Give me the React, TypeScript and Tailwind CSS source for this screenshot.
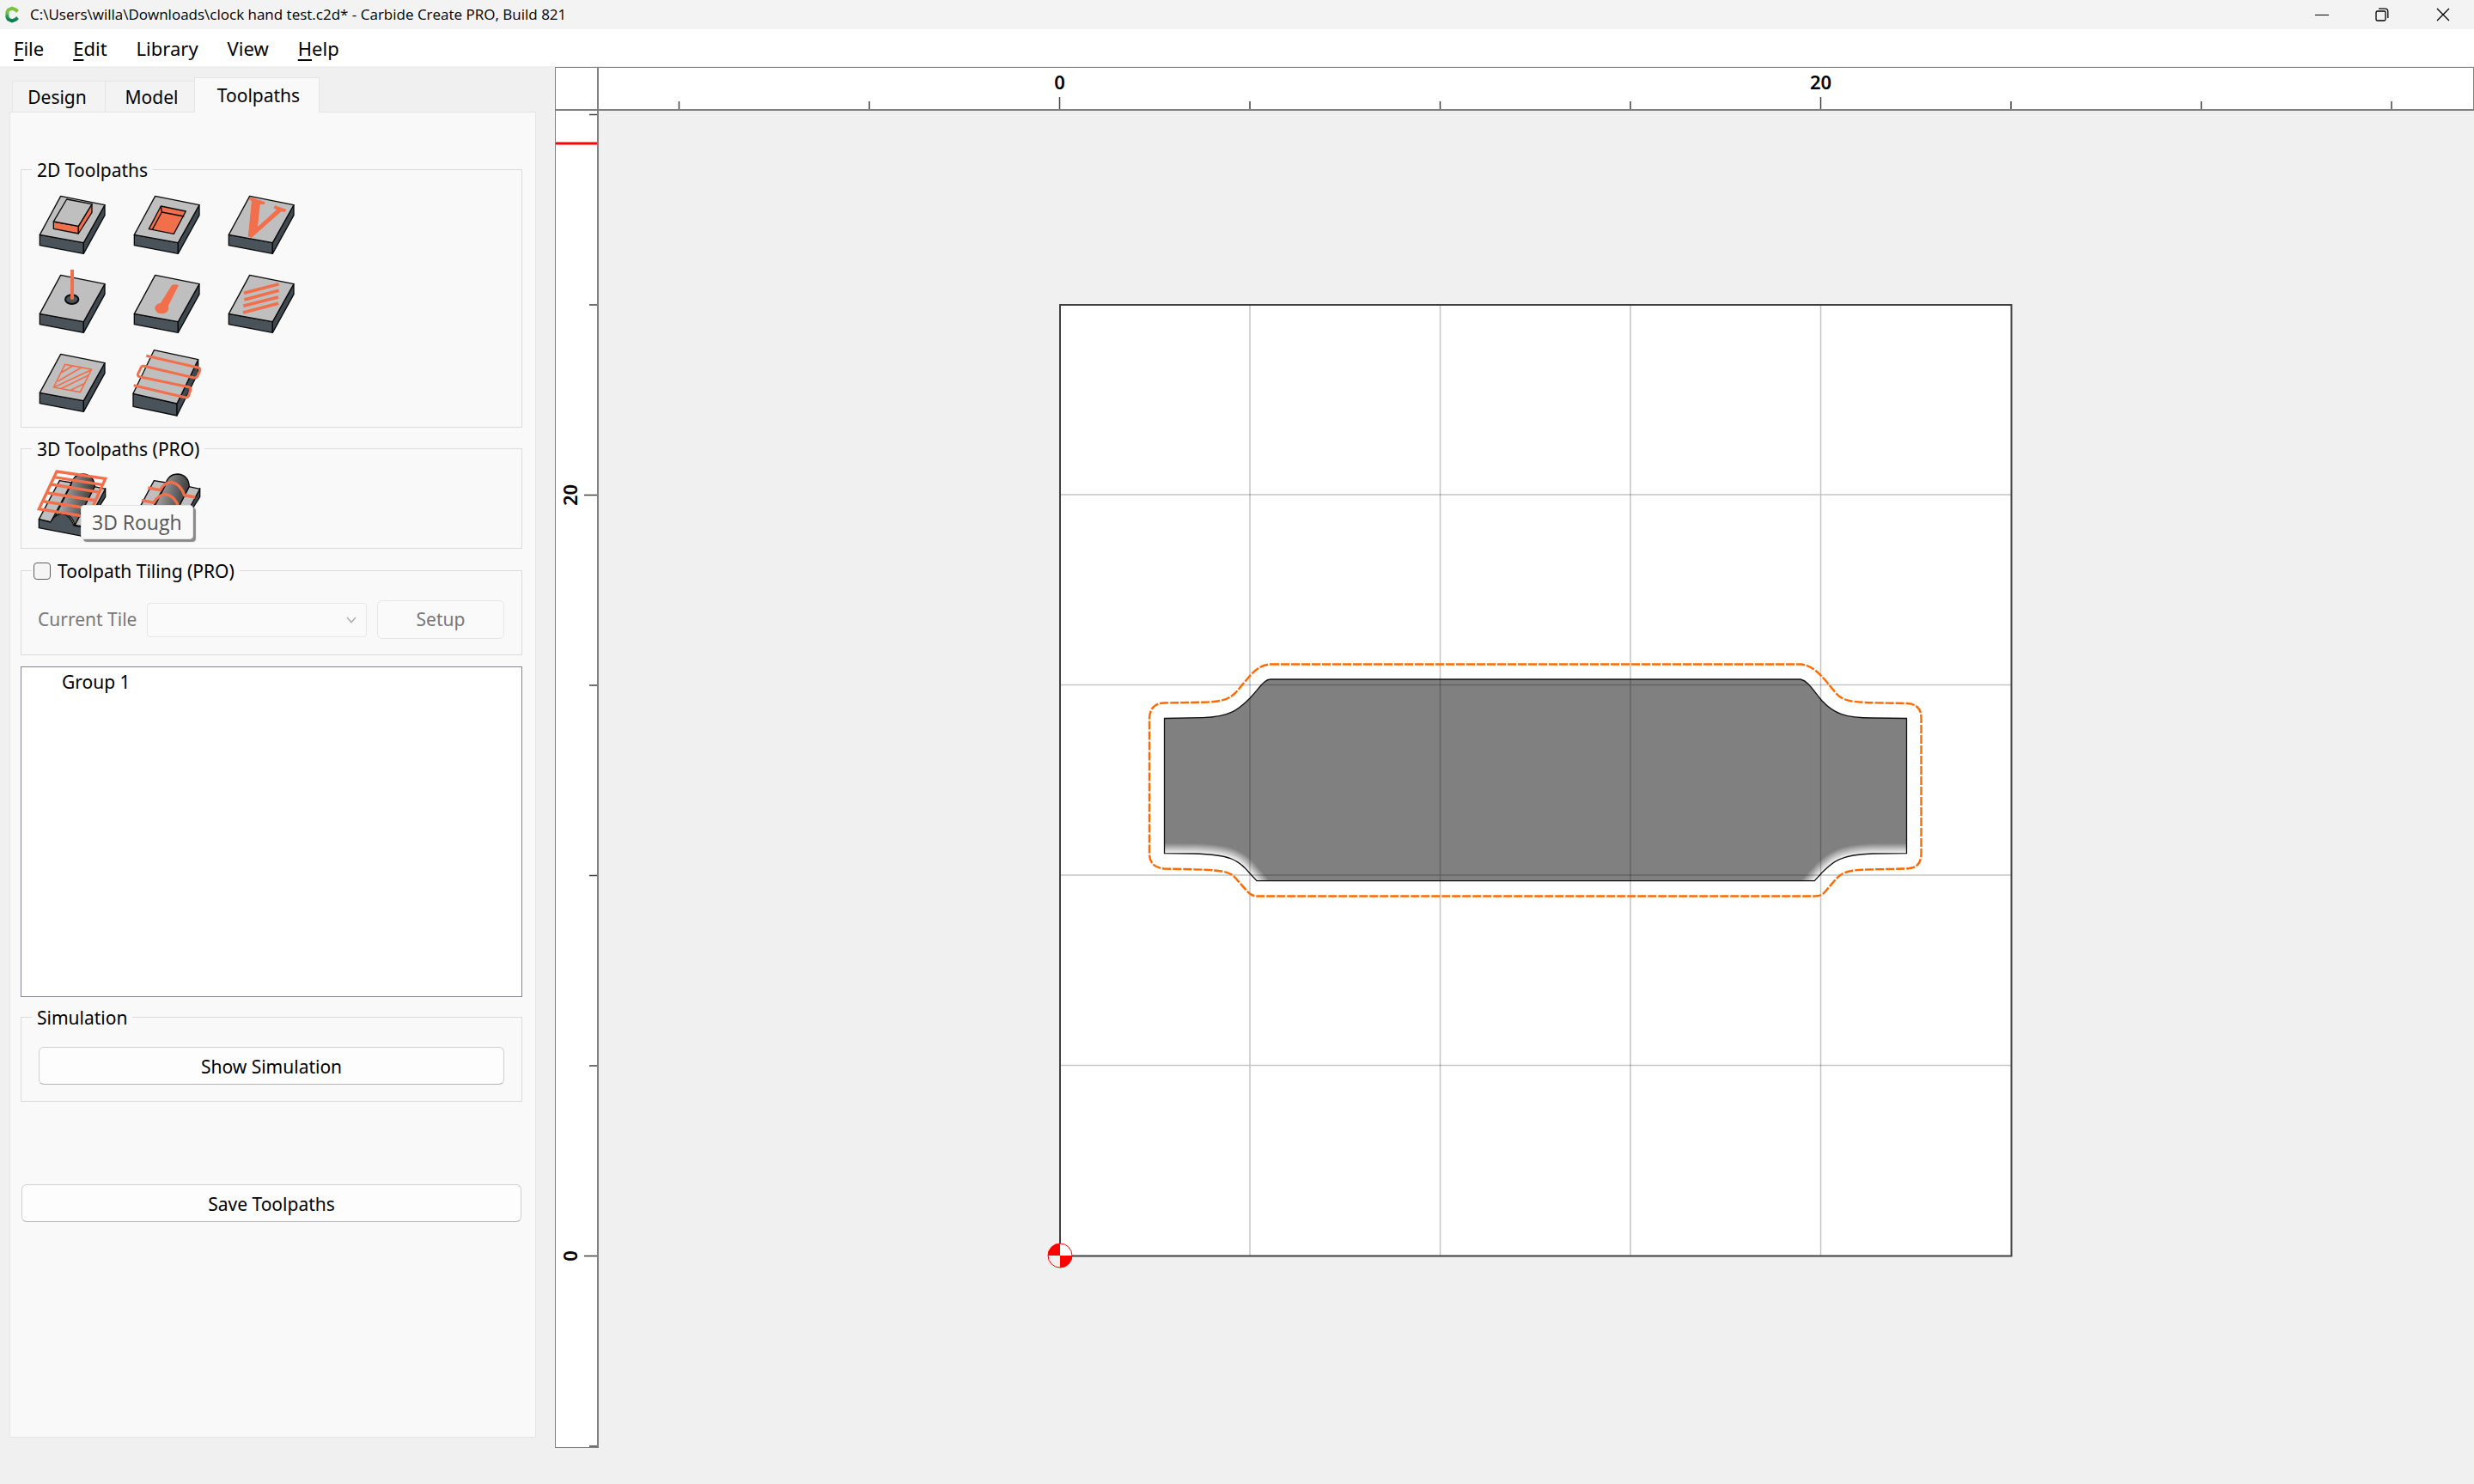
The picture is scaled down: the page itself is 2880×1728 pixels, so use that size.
import type { ReactNode } from "react";

const ORANGE = "#f26f4c";
const STEP = 221.5;

/* ---------- toolpath icons ---------- */

function Slab() {
  return (
    <g stroke="#0a0a0a" strokeWidth="4" strokeLinejoin="round">
      <path d="M7 154L160 182V220L7 191Z" fill="#4a525a" />
      <path d="M160 182L234 50V86L160 220Z" fill="#414950" />
      <path d="M80 19L234 50L160 182L7 154Z" fill="#bfbfbf" />
    </g>
  );
}

function Icon({ children }: { children: ReactNode }) {
  return (
    <svg viewBox="0 0 240 240" className="size-20 overflow-visible" aria-hidden="true">
      {children}
    </svg>
  );
}

const ContourIcon = () => (
  <Icon>
    <Slab />
    <g stroke="#0a0a0a" strokeWidth="4" strokeLinejoin="round">
      <path d="M55 108L142 124V150L55 133Z" fill={ORANGE} />
      <path d="M189 47V76L142 150V124Z" fill={ORANGE} />
      <path d="M101 30L189 47L142 124L55 108Z" fill="#bfbfbf" />
    </g>
  </Icon>
);

const PocketIcon = () => (
  <Icon>
    <Slab />
    <g stroke="#0a0a0a" strokeWidth="4" strokeLinejoin="round">
      <path d="M100 54L187 72L145 151L58 134Z" fill={ORANGE} />
      <path d="M100 54L103 75L181 90M103 75L70 136" fill="none" />
    </g>
  </Icon>
);

const VCarveIcon = () => (
  <Icon>
    <Slab />
    <text
      transform="translate(30 140) rotate(19)"
      fill={ORANGE}
      stroke={ORANGE}
      strokeWidth="3"
      fontFamily="Liberation Serif, serif"
      fontStyle="italic"
      fontWeight="700"
      fontSize="194"
    >
      V
    </text>
  </Icon>
);

const DrillIcon = () => (
  <Icon>
    <Slab />
    <ellipse cx="119" cy="104" rx="23" ry="16" fill="#4a525a" stroke="#0a0a0a" strokeWidth="6" />
    <path d="M120 0V104" stroke={ORANGE} strokeWidth="12" />
  </Icon>
);

const KeyholeIcon = () => (
  <Icon>
    <Slab />
    <ellipse cx="103" cy="135" rx="24" ry="19" fill={ORANGE} />
    <path d="M138 54Q149 49 162 54L125 128L98 118Z" fill={ORANGE} />
  </Icon>
);

const HatchIcon = () => (
  <Icon>
    <Slab />
    <path
      d="M60 82L182 50M61 105L182 73M58 127L180 96M57 150L180 118"
      stroke={ORANGE}
      strokeWidth="11"
    />
  </Icon>
);

const TextureIcon = () => (
  <Icon>
    <Slab />
    <path
      d="M95 55L188 72L148 152L55 135ZM122 60L82 84M152 66L70 114M186 74L58 134M178 92L80 140M166 120L112 146"
      stroke={ORANGE}
      strokeWidth="5"
      fill="none"
      strokeLinejoin="round"
    />
  </Icon>
);

const FacingIcon = () => (
  <Icon>
    <g stroke="#0a0a0a" strokeWidth="4" strokeLinejoin="round">
      <path d="M3 157L156 192V234L3 202Z" fill="#4a525a" />
      <path d="M156 192L230 38V84L156 234Z" fill="#414950" />
      <path d="M76 5L230 38L156 192L3 157Z" fill="#bfbfbf" />
    </g>
    <path
      d="M49 25L229 66Q238 68 236 77L228 95Q224 104 214 101L41 61Q33 59 30 67L20 88Q17 96 26 98L198 134Q206 137 203 145L197 164Q192 173 184 170L5 128"
      stroke={ORANGE}
      strokeWidth="9"
      fill="none"
    />
  </Icon>
);

function Ridge() {
  return (
    <>
      <defs>
        <linearGradient id="ridge" x1="0" x2="1" y1="0.35" y2="0.6">
          <stop offset="0.1" stopColor="#b0b0b0" />
          <stop offset="0.85" stopColor="#444444" />
        </linearGradient>
      </defs>
      <g stroke="#0a0a0a" strokeWidth="4" strokeLinejoin="round">
        <path d="M160 192L236 62V92L150 228Z" fill="#414950" />
        <path d="M198 56L236 64L165 196L128 190Z" fill="#bfbfbf" />
        <path d="M76 35L118 42L45 180L4 170Z" fill="#bfbfbf" />
        <path d="M60 160L116 50Q124 12 160 12Q196 16 199 55L130 190Q110 130 60 160Z" fill="url(#ridge)" />
        <path d="M4 170L44 180Q60 152 84 150Q112 154 126 192L160 198V230L4 200Z" fill="#4a525a" />
      </g>
    </>
  );
}

const Rough3DIcon = () => (
  <Icon>
    <Ridge />
    <path
      d="M66 3L236 28L176 162L4 134ZM58 23L228 50M47 48L218 76M35 78L206 105M22 108L192 134"
      stroke={ORANGE}
      strokeWidth="10"
      fill="none"
    />
  </Icon>
);

const Finish3DIcon = () => (
  <Icon>
    <Ridge />
    <path
      d="M55 60L98 68Q112 40 138 41Q168 46 182 86L220 93M33 103L75 112Q92 82 118 83Q148 88 162 128L200 136"
      stroke={ORANGE}
      strokeWidth="10"
      fill="none"
    />
  </Icon>
);

const tools2D: [string, () => ReactNode][] = [
  ["Contour", ContourIcon],
  ["Pocket", PocketIcon],
  ["V-Carve", VCarveIcon],
  ["Drill", DrillIcon],
  ["Keyhole", KeyholeIcon],
  ["Engrave", HatchIcon],
  ["Texture", TextureIcon],
  ["Facing", FacingIcon],
];

const tools3D: [string, () => ReactNode][] = [
  ["3D Rough", Rough3DIcon],
  ["3D Finish", Finish3DIcon],
];

/* ---------- window chrome ---------- */

function TitleBar() {
  return (
    <header className="flex h-[34px] shrink-0 items-center bg-[#f3f3f3]">
      <svg viewBox="0 0 18 20" className="ml-[5px] h-5 w-[18px]" aria-hidden="true">
        <defs>
          <linearGradient id="logo" x1="0" x2="0" y1="0" y2="1">
            <stop offset="0.35" stopColor="#7cc242" />
            <stop offset="0.65" stopColor="#1d9a5b" />
            <stop offset="1" stopColor="#0b7a4b" />
          </linearGradient>
        </defs>
        <path
          d="M15.5 6.5L13.5 4.5L9 2.6L4.8 4.5L3.4 7V13L4.8 15.5L9 17.4L13.5 15.5L15.5 13.5"
          fill="none"
          stroke="url(#logo)"
          strokeWidth="4"
        />
      </svg>
      <h1 className="ml-3 flex-1 font-['Open_Sans',sans-serif] text-[17px] leading-6 text-black">
        C:\Users\willa\Downloads\clock hand test.c2d* - Carbide Create PRO, Build 821
      </h1>
      <div className="flex">
        <button aria-label="Minimize" className="grid h-[34px] w-[70px] place-items-center">
          <svg viewBox="0 0 16 16" className="size-4" stroke="#000" fill="none">
            <path d="M0 8.5H16" />
          </svg>
        </button>
        <button aria-label="Restore" className="grid h-[34px] w-[70px] place-items-center">
          <svg viewBox="0 0 16 16" className="size-4" stroke="#000" strokeWidth="1.3" fill="none">
            <rect x="1" y="4" width="11" height="11" rx="1.5" />
            <path d="M4 1.2H11.5Q14.8 1.2 14.8 4.5V12" />
          </svg>
        </button>
        <button aria-label="Close" className="grid h-[34px] w-[72px] place-items-center">
          <svg viewBox="0 0 16 16" className="size-4" stroke="#000" strokeWidth="1.3" fill="none">
            <path d="M1 1L15 15M15 1L1 15" />
          </svg>
        </button>
      </div>
    </header>
  );
}

function MenuBar() {
  const hot = "underline decoration-2 underline-offset-4";
  return (
    <nav className="flex h-[43px] shrink-0 items-center gap-[34px] bg-white px-4 text-[22px] leading-7">
      <button><span className={hot}>F</span>ile</button>
      <button><span className={hot}>E</span>dit</button>
      <button>Library</button>
      <button>View</button>
      <button><span className={hot}>H</span>elp</button>
    </nav>
  );
}

/* ---------- side panel ---------- */

function Group({ title, className, children }: { title: ReactNode; className: string; children: ReactNode }) {
  return (
    <fieldset className={`min-w-0 border border-[#dcdcdc] ${className}`}>
      <legend className="ml-3 h-7 px-1.5 leading-[30px]">{title}</legend>
      {children}
    </fieldset>
  );
}

function SidePanel() {
  const button =
    "rounded-md border border-[#d0d0d0] border-b-[#b5b5b5] bg-[#fdfdfd] pt-px text-center leading-7";
  return (
    <aside className="flex w-[646px] shrink-0 flex-col pt-[13px] pr-[22px] pb-[54px] pl-[11px] text-[21px]">
      <div role="tablist" className="flex items-end pl-[3px] leading-7">
        <button role="tab" className="h-9 w-[109px] border border-b-0 border-[#e5e5e5] bg-[#f3f3f3] pt-px pr-1">Design</button>
        <button role="tab" className="h-9 w-[103px] border-t border-[#e5e5e5] bg-[#f3f3f3] pt-px pl-1">Model</button>
        <button role="tab" aria-selected="true" className="z-10 -mb-px h-[41px] w-[146px] border border-b-0 border-[#e5e5e5] bg-[#f9f9f9] pl-1">Toolpaths</button>
      </div>
      <div role="tabpanel" className="flex flex-1 flex-col border border-[#e5e5e5] bg-[#f9f9f9] pt-[52px] pr-[15px] pl-3">
        <Group title="2D Toolpaths" className="h-[315px]">
          <div className="mt-[11px] ml-[19px] grid w-[300px] grid-cols-3 gap-x-[30px] gap-y-3">
            {tools2D.map(([name, Glyph]) => (
              <button key={name} aria-label={name} className="size-20"><Glyph /></button>
            ))}
          </div>
        </Group>

        <Group title="3D Toolpaths (PRO)" className="mt-[10px] h-[131px]">
          <div className="relative mt-3 ml-[19px] flex gap-[30px]">
            {tools3D.map(([name, Glyph]) => (
              <button key={name} aria-label={name} className="size-20"><Glyph /></button>
            ))}
            <div
              role="tooltip"
              className="absolute top-10 left-[50px] rounded-sm border border-[#e3e3e3] bg-[#f9f9f9] px-3 py-[5px] font-['Open_Sans',sans-serif] text-[23px] leading-7 text-[#575757] shadow-[3px_3px_1px_#8a8a8a]"
            >
              3D Rough
            </div>
          </div>
        </Group>

        <Group
          className="mt-[11px] h-[113px]"
          title={
            <label className="-ml-1 flex items-center gap-2">
              <input
                type="checkbox"
                className="size-5 appearance-none rounded border border-[#5f5f5f] bg-[#f5f5f5]"
              />
              Toolpath Tiling (PRO)
            </label>
          }
        >
          <div className="mt-[21px] mr-[20px] ml-[19px] flex items-center gap-3 text-[#787878]">
            <label htmlFor="tile">Current Tile</label>
            <div className="relative flex-1">
              <select
                id="tile"
                disabled
                className="block h-10 w-full appearance-none rounded-sm border border-[#e6e6e6] bg-[#fafafa]"
              />
              <svg viewBox="0 0 12 8" className="absolute top-4 right-3 h-2 w-3" fill="none" stroke="#b0b0b0" strokeWidth="1.6">
                <path d="M1 1L6 6.5L11 1" />
              </svg>
            </div>
            <button disabled className="h-[45px] w-[148px] rounded-md border border-[#e6e6e6] bg-[#fafafa]">Setup</button>
          </div>
        </Group>

        <ul className="mt-[13px] h-[385px] border border-[#84858f] bg-white pt-[3px] pl-[47px] leading-7">
          <li>Group 1</li>
        </ul>

        <Group title="Simulation" className="mt-[9px] h-[113px]">
          <div className="mt-[21px] flex px-[20px]">
            <button className={`h-11 flex-1 ${button}`}>Show Simulation</button>
          </div>
        </Group>

        <button className={`mx-px mt-24 h-11 ${button}`}>Save Toolpaths</button>
      </div>
    </aside>
  );
}

/* ---------- workspace ---------- */

const topTicks = Array.from({ length: 10 }, (_, i) => i - 2);
const sideTicks = Array.from({ length: 8 }, (_, i) => i - 1);

function TopRuler() {
  return (
    <svg className="block h-[49px] w-full border-t border-r border-[#808080] bg-white" stroke="#404040" strokeWidth="1.5">
      {topTicks.map((n) => {
        const x = 536.5 + n * STEP;
        const major = n % 4 === 0;
        return (
          <g key={n}>
            <path d={`M${x} ${major ? 34 : 39}V49`} />
            {major && (
              <text x={x} y="25" textAnchor="middle" fontWeight="600" fontSize="22" fill="#000" stroke="none">
                {n * 5}
              </text>
            )}
          </g>
        );
      })}
    </svg>
  );
}

function SideRuler() {
  return (
    <svg className="block h-full w-full bg-white" stroke="#404040" strokeWidth="1.5">
      {sideTicks.map((n) => {
        const y = 1333.5 - n * STEP;
        const major = n % 4 === 0;
        return (
          <g key={n}>
            <path d={`M${major ? 33 : 39} ${y}H49`} />
            {major && (
              <text transform={`translate(25 ${y}) rotate(-90)`} textAnchor="middle" fontWeight="600" fontSize="22" fill="#000" stroke="none">
                {n * 5}
              </text>
            )}
          </g>
        );
      })}
      <path d="M0 38H49" stroke="#ff0000" strokeWidth="3" />
    </svg>
  );
}

const PART =
  "M1355.5 836.5L1400 835.6C1432 835 1442 826 1455 813C1467 800 1472 791 1479 791H2096C2105 793 2110 803 2121 816C2135 831 2148 836 2180 836L2219.5 836.5V993.7L2180 994C2142 995 2133 1004 2121 1016L2112.3 1025.7H1463L1455 1017C1442 1002 1434 995 1390 994L1355.5 993.7Z";
const LEFT_EDGE = "M1340 993.7H1355.5L1390 994C1434 995 1442 1002 1455 1017L1475 1040";
const RIGHT_EDGE = "M2235 993.7H2219.5L2180 994C2142 995 2133 1004 2121 1016L2099 1040";
const OFFSET =
  "M1479 773.5H2096C2113 775 2123 790 2138 808C2148 819 2163 818 2220 819Q2236.5 820 2236.5 836V994Q2236.5 1011 2220 1011.5L2175 1012.5C2150 1013 2144 1016 2136 1025L2124 1039Q2120 1043.5 2113 1043.5H1463Q1457 1043.5 1452 1038L1437 1021C1428 1012 1410 1013 1355 1011.5Q1338 1010 1338 994V836Q1339 819 1355 818.5L1400 817.7C1425 817 1430 814 1438 807L1455 787Q1466 774 1479 773.5Z";

function Canvas() {
  return (
    <svg className="block h-full w-full" role="img" aria-label="Job canvas">
      <defs>
        <clipPath id="part"><path d={PART} /></clipPath>
      </defs>
      <g transform="translate(-697 -129)">
        <rect x="1233.5" y="354.5" width="1107.5" height="1107.5" fill="#fff" />
        <path d={PART} fill="#808080" />
        <g clipPath="url(#part)" fill="none">
          {Array.from({ length: 12 }, (_, i) => (
            <path
              key={i}
              d={`${LEFT_EDGE}${RIGHT_EDGE}`}
              stroke={`rgb(${134 + i * 10} ${134 + i * 10} ${134 + i * 10})`}
              strokeWidth={24 - i * 2}
            />
          ))}
        </g>
        <path d={PART} fill="none" stroke="#111" strokeWidth="1.3" />
        <g stroke="#000" strokeOpacity="0.23" strokeWidth="1.5">
          {[1, 2, 3, 4].map((n) => (
            <path key={n} d={`M${1233.5 + n * STEP} 355V1462M1234 ${1462 - n * STEP}H2341`} />
          ))}
        </g>
        <path d={OFFSET} fill="none" stroke="#ff6a00" strokeWidth="2.4" strokeDasharray="10 2" />
        <rect x="1234" y="355" width="1107.5" height="1107.5" fill="none" stroke="#404040" strokeWidth="2" />
        <circle cx="1234" cy="1462" r="14" fill="#f0f0f0" />
        <path d="M1234 1462V1448A14 14 0 0 1 1248 1462Z" fill="#fff" />
        <path d="M1234 1462V1448A14 14 0 0 0 1220 1462ZM1234 1462V1476A14 14 0 0 0 1248 1462Z" fill="#f00" />
        <circle cx="1234" cy="1462" r="14" fill="none" stroke="#f00" strokeWidth="1" />
      </g>
    </svg>
  );
}

export default function App() {
  return (
    <div className="flex h-screen flex-col overflow-hidden bg-[#f0f0f0] font-['Noto_Sans',sans-serif] text-[22px] text-black">
      <TitleBar />
      <MenuBar />
      <div className="flex min-h-0 flex-1">
        <SidePanel />
        <main className="mt-px mb-[42px] grid min-w-0 flex-1 grid-cols-[51px_1fr] grid-rows-[51px_1fr]">
          <div className="border-t border-r-2 border-b-2 border-l border-[#808080] bg-white" />
          <div className="border-b-2 border-[#808080]"><TopRuler /></div>
          <div className="min-h-0 border-r-2 border-b border-l border-[#808080]"><SideRuler /></div>
          <div className="min-h-0"><Canvas /></div>
        </main>
      </div>
    </div>
  );
}
